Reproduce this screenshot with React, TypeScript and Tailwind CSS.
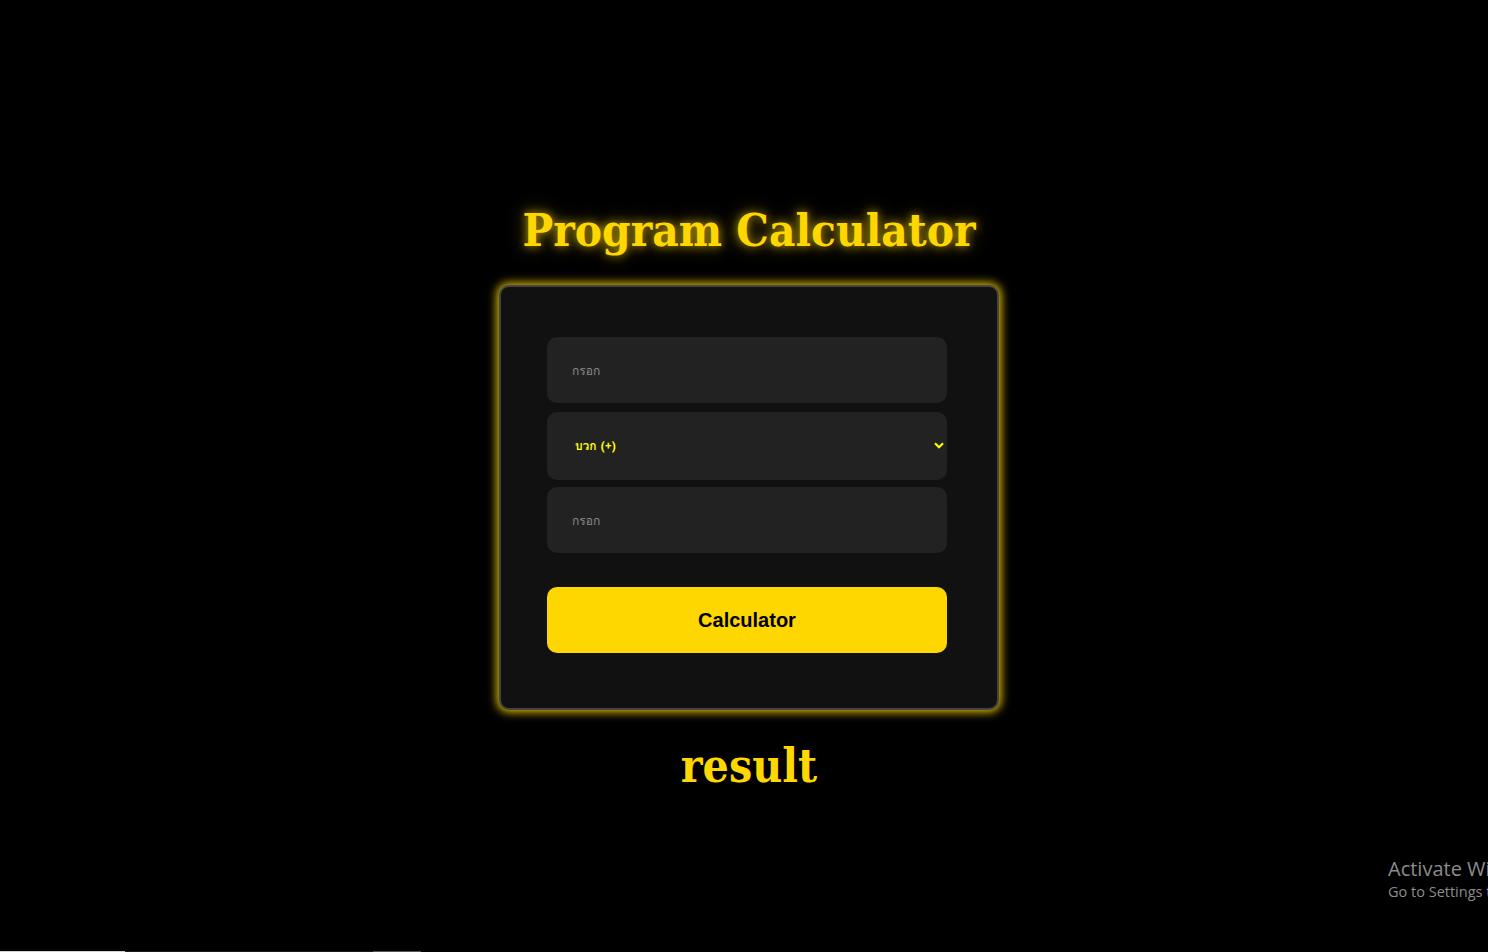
import React from "react";

const thai = '"Loma", "Noto Sans", "Noto Sans Thai", sans-serif';
const slab = '"DejaVu Serif Condensed", "DejaVu Serif", serif';

export default function App() {
  return (
    <div className="relative min-h-[952px] w-full overflow-hidden bg-black">
      <div className="flex flex-col items-center pt-[200px] pl-[10px]">
        <h1
          className="text-[45.5px] font-bold leading-[60px] text-[#ffd700]"
          style={{ fontFamily: slab, textShadow: "0 0 10px rgba(255,215,0,0.7), 0 0 20px rgba(255,215,0,0.35)" }}
        >
          Program Calculator
        </h1>
        <div className="mt-[25px] flex w-[500px] flex-col rounded-[10px] border-2 border-[#444444] bg-[#111111] px-[46px] pt-[50px] pb-[55px] shadow-[0_0_10px_2px_rgba(255,215,0,0.9)]">
          <input
            type="text"
            placeholder="กรอก"
            className="h-[66px] w-[400px] rounded-[10px] bg-[#222222] px-[25px] text-[12px] text-white outline-none placeholder:text-[#8a8a8a]"
            style={{ fontFamily: thai }}
          />
          <div className="relative mt-[9px] h-[68px] w-[400px]">
            <select
              className="h-full w-full appearance-none rounded-[10px] bg-[#222222] px-[28px] text-[12px] font-bold text-[#ffff00] outline-none"
              style={{ fontFamily: thai }}
              defaultValue="add"
            >
              <option value="add">บวก (+)</option>
              <option value="sub">ลบ (-)</option>
              <option value="mul">คูณ (×)</option>
              <option value="div">หาร (÷)</option>
            </select>
            <svg className="pointer-events-none absolute right-[3px] top-[30px]" width="10" height="7" viewBox="0 0 10 7">
              <path d="M1 1.2 L5 5.2 L9 1.2" stroke="#ffff00" strokeWidth="2.2" fill="none" />
            </svg>
          </div>
          <input
            type="text"
            placeholder="กรอก"
            className="mt-[7px] h-[66px] w-[400px] rounded-[10px] bg-[#222222] px-[25px] text-[12px] text-white outline-none placeholder:text-[#8a8a8a]"
            style={{ fontFamily: thai }}
          />
          <button
            className="mt-[34px] h-[66px] w-[400px] rounded-[10px] bg-[#ffd700] text-[20px] font-bold text-black"
            style={{ fontFamily: '"Liberation Sans", Arial, sans-serif' }}
          >
            Calculator
          </button>
        </div>
        <div
          className="mt-[26px] text-[46px] font-bold leading-[60px] text-[#ffd700]"
          style={{ fontFamily: slab }}
        >
          result
        </div>
      </div>

      <div
        className="pointer-events-none absolute left-[1388px] top-[856px] whitespace-nowrap text-[#8c8c8c]"
        style={{ fontFamily: '"Open Sans", "Noto Sans", sans-serif' }}
      >
        <div className="text-[20px] leading-[26px]">Activate Windows</div>
        <div className="text-[14.5px] leading-[20px]">Go to Settings to activate Windows.</div>
      </div>
      <div className="absolute bottom-0 left-0 flex h-px w-full">
        <div className="w-[125px] bg-[#d0d0d0]" />
        <div className="w-[248px] bg-[#1a1a1a]" />
        <div className="w-[48px] bg-[#555555]" />
      </div>
    </div>
  );
}
